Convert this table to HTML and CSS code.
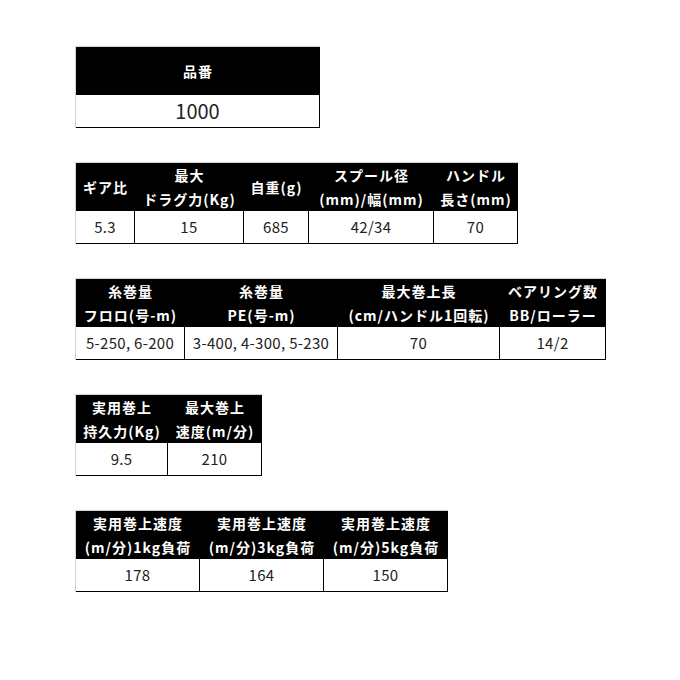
FILE: index.html
```html
<!DOCTYPE html>
<html lang="ja">
<head>
<meta charset="utf-8">
<link rel="stylesheet" href="styles.css">
</head>
<body>
<div class="page">
  <table class="spec">
    <tr><th class="w244">品番</th></tr>
    <tr><td class="big">1000</td></tr>
  </table>

  <table class="spec">
    <tr>
      <th class="w59">ギア比</th>
      <th class="w109">最大<br>ドラグ力(Kg)</th>
      <th class="w65">自重(g)</th>
      <th class="w125">スプール径<br>(mm)/幅(mm)</th>
      <th class="w84">ハンドル<br>長さ(mm)</th>
    </tr>
    <tr><td>5.3</td><td>15</td><td>685</td><td>42/34</td><td>70</td></tr>
  </table>

  <table class="spec">
    <tr>
      <th class="w109">糸巻量<br>フロロ(号-m)</th>
      <th class="w153">糸巻量<br>PE(号-m)</th>
      <th class="w162">最大巻上長<br>(cm/ハンドル1回転)</th>
      <th class="w106">ベアリング数<br>BB/ローラー</th>
    </tr>
    <tr><td>5-250, 6-200</td><td>3-400, 4-300, 5-230</td><td>70</td><td>14/2</td></tr>
  </table>

  <table class="spec">
    <tr>
      <th class="w92">実用巻上<br>持久力(Kg)</th>
      <th class="w94">最大巻上<br>速度(m/分)</th>
    </tr>
    <tr><td>9.5</td><td>210</td></tr>
  </table>

  <table class="spec">
    <tr>
      <th class="w124">実用巻上速度<br>(m/分)1kg負荷</th>
      <th class="w124">実用巻上速度<br>(m/分)3kg負荷</th>
      <th class="w124">実用巻上速度<br>(m/分)5kg負荷</th>
    </tr>
    <tr><td>178</td><td>164</td><td>150</td></tr>
  </table>
</div>
</body>
</html>
```

FILE: styles.css
```css
html, body {
  margin: 0;
  padding: 0;
  background: #fff;
}

.page {
  display: flex;
  flex-direction: column;
  align-items: flex-start;
  gap: 34px;
  padding: 46px 0 0 75px;
  font-family: "Noto Sans CJK JP", "Noto Sans", sans-serif;
}

.spec {
  border-collapse: separate;
  border-spacing: 0;
  table-layout: fixed;
  border-top: 1px solid #d4d4d4;
  border-left: 1px solid #d4d4d4;
}

.spec th {
  box-sizing: border-box;
  height: 48px;
  padding: 0;
  background: #000;
  color: #fff;
  font-size: 14px;
  font-weight: 700;
  line-height: 24px;
  letter-spacing: 1px;
  text-align: center;
  white-space: nowrap;
  overflow: hidden;
}

.spec td {
  box-sizing: border-box;
  height: 33px;
  padding: 0;
  border-right: 1px solid #000;
  border-bottom: 1px solid #000;
  color: #222;
  font-size: 15px;
  font-weight: 400;
  line-height: 32px;
  letter-spacing: 0.3px;
  text-align: center;
  white-space: nowrap;
}

.spec td.big {
  font-size: 20px;
  letter-spacing: 0;
}

.w244 { width: 244px; }
.w59 { width: 59px; }
.w109 { width: 109px; }
.w65 { width: 65px; }
.w125 { width: 125px; }
.w84 { width: 84px; }
.w153 { width: 153px; }
.w162 { width: 162px; }
.w106 { width: 106px; }
.w92 { width: 92px; }
.w94 { width: 94px; }
.w124 { width: 124px; }
```
